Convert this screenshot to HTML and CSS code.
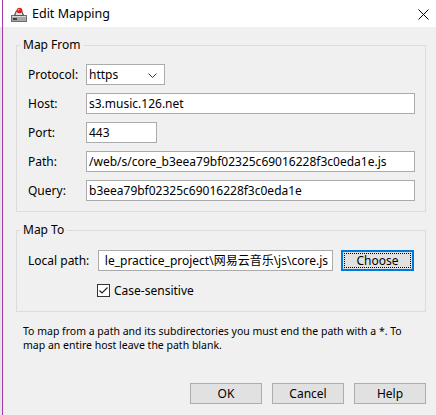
FILE: index.html
```html
<!DOCTYPE html>
<html>
<head>
<meta charset="utf-8">
<link rel="stylesheet" href="styles.css">
</head>
<body>
<div class="screen">
  <div class="edge"></div>
  <div class="dialog">
    <div class="titlebar">
      <svg class="appicon" width="16" height="16" viewBox="0 0 16 16">
        <rect x="0.5" y="9.5" width="15" height="6" fill="#a8a8a8" stroke="#6e6e6e" stroke-width="1"/>
        <rect x="1" y="10" width="14" height="1" fill="#d8d8d8"/>
        <path d="M2.5 10 L5 4.5 L11 4.5 L13.5 10 Z" fill="#4f5864"/>
        <path d="M5.5 6 L10.5 6 L11.5 9 L4.5 9 Z" fill="#e2e2e2"/>
        <circle cx="8.5" cy="4.5" r="2.8" fill="#e31b1b"/>
        <circle cx="7.7" cy="3.7" r="0.9" fill="#ffa0a0"/>
        <rect x="2" y="12" width="4" height="2" fill="#3f3f3f"/>
      </svg>
      <span class="title">Edit Mapping</span>
      <svg class="close" width="11" height="11" viewBox="0 0 11 11">
        <path d="M0.5 0.5 L10.5 10.5 M10.5 0.5 L0.5 10.5" stroke="#000" stroke-width="1"/>
      </svg>
    </div>
    <div class="content">
      <fieldset class="group group-from">
        <legend>Map From</legend>
        <div class="form">
          <span class="label">Protocol:</span>
          <div class="field select">
            <span>https</span>
            <svg class="chev" width="9" height="5" viewBox="0 0 9 5"><path d="M0.5 0.5 L4.5 4.5 L8.5 0.5" fill="none" stroke="#333" stroke-width="1"/></svg>
          </div>
          <span class="label">Host:</span>
          <div class="field">s3.music.126.net</div>
          <span class="label">Port:</span>
          <div class="field port">443</div>
          <span class="label">Path:</span>
          <div class="field">/web/s/core_b3eea79bf02325c69016228f3c0eda1e.js</div>
          <span class="label">Query:</span>
          <div class="field">b3eea79bf02325c69016228f3c0eda1e</div>
        </div>
      </fieldset>
      <fieldset class="group group-to">
        <legend>Map To</legend>
        <div class="form-to">
          <span class="label">Local path:</span>
          <div class="field local"><span class="local-text">le_practice_project\网易云音乐\js\core.js</span></div>
          <div class="btn choose"><span class="focus">Choose</span></div>
          <label class="check">
            <span class="box">
              <svg width="11" height="11" viewBox="0 0 11 11"><path d="M1.5 5.5 L4 8 L9.5 2.5" fill="none" stroke="#222" stroke-width="1.2"/></svg>
            </span>
            <span>Case-sensitive</span>
          </label>
        </div>
      </fieldset>
      <p class="note">To map from a path and its subdirectories you must end the path with a *. To map an entire host leave the path blank.</p>
      <div class="buttons">
        <div class="btn">OK</div>
        <div class="btn">Cancel</div>
        <div class="btn">Help</div>
      </div>
    </div>
  </div>
</div>
</body>
</html>
```
FILE: styles.css
```css
* { box-sizing: border-box; }
html, body { margin: 0; padding: 0; }
body {
  font-family: "Noto Sans", "Noto Sans CJK SC", sans-serif;
  font-size: 12px;
  color: #000;
  background: #f0f0f0;
}
.screen {
  display: flex;
  width: 436px;
  height: 415px;
  overflow: hidden;
}
.edge {
  width: 2px;
  flex: none;
  background: linear-gradient(#ffffff 0 27px, #e6e6e6 27px);
}
.dialog {
  flex: 1;
  min-width: 0;
  border-left: 1px solid #a83aa6;
  background: #f0f0f0;
  display: flex;
  flex-direction: column;
}
.titlebar {
  height: 27px;
  background: #fff;
  display: flex;
  align-items: center;
  padding-left: 8px;
  padding-right: 7px;
}
.appicon { flex: none; margin-top: 1px; }
.title {
  margin-left: 5px;
  font-size: 12.5px;
  line-height: 16px;
  flex: 1;
}
.close { flex: none; margin-top: 1px; }
.content {
  padding: 10px 10px 0 13px;
  display: flex;
  flex-direction: column;
  min-width: 0;
}
.group {
  margin: 0;
  border: 1px solid #dcdcdc;
  min-width: 0;
  width: 100%;
}
.group legend {
  padding: 0 3px;
  margin-left: -8px;
  line-height: 16px;
}
.group-from { padding: 11px 10px 10px 11px; }
.group-to { padding: 12px 10px 13px 11px; margin-top: 10px; }
.form {
  display: grid;
  grid-template-columns: 58px 1fr;
  row-gap: 8px;
  align-items: center;
}
.label { line-height: 16px; white-space: nowrap; }
.field {
  height: 21px;
  background: #fff;
  border: 1px solid #ababab;
  padding: 0 3px 0 2px;
  line-height: 19px;
  white-space: nowrap;
  overflow: hidden;
}
.select {
  width: 79px;
  display: flex;
  align-items: center;
  justify-content: space-between;
  padding-right: 7px;
}
.chev { margin-top: 1px; }
.port { width: 71px; }
.form-to {
  display: grid;
  grid-template-columns: 62px 235px 73px;
  column-gap: 8px;
  row-gap: 11px;
  align-items: center;
}
.local {
  display: flex;
  justify-content: flex-end;
  padding-right: 4px;
}
.local-text { flex: none; }
.btn {
  height: 21px;
  width: 72px;
  background: #e1e1e1;
  border: 1px solid #adadad;
  display: flex;
  align-items: center;
  justify-content: center;
  line-height: 16px;
}
.choose {
  width: 73px;
  border: 2px solid #0078d7;
  padding: 1px;
}
.choose .focus {
  width: 100%;
  height: 100%;
  border: 1px dotted #000;
  display: flex;
  align-items: center;
  justify-content: center;
}
.check {
  grid-column: 2 / 4;
  display: flex;
  align-items: center;
  height: 16px;
  margin-left: -1px;
}
.box {
  width: 13px;
  height: 13px;
  border: 1px solid #333;
  background: #fff;
  display: flex;
  align-items: center;
  justify-content: center;
  margin-right: 4px;
}
.note {
  margin: 12px 0 0 7px;
  font-size: 10.5px;
  line-height: 14px;
  width: 400px;
}
.buttons {
  margin-top: 31px;
  display: flex;
  justify-content: flex-end;
  gap: 10px;
}
```
